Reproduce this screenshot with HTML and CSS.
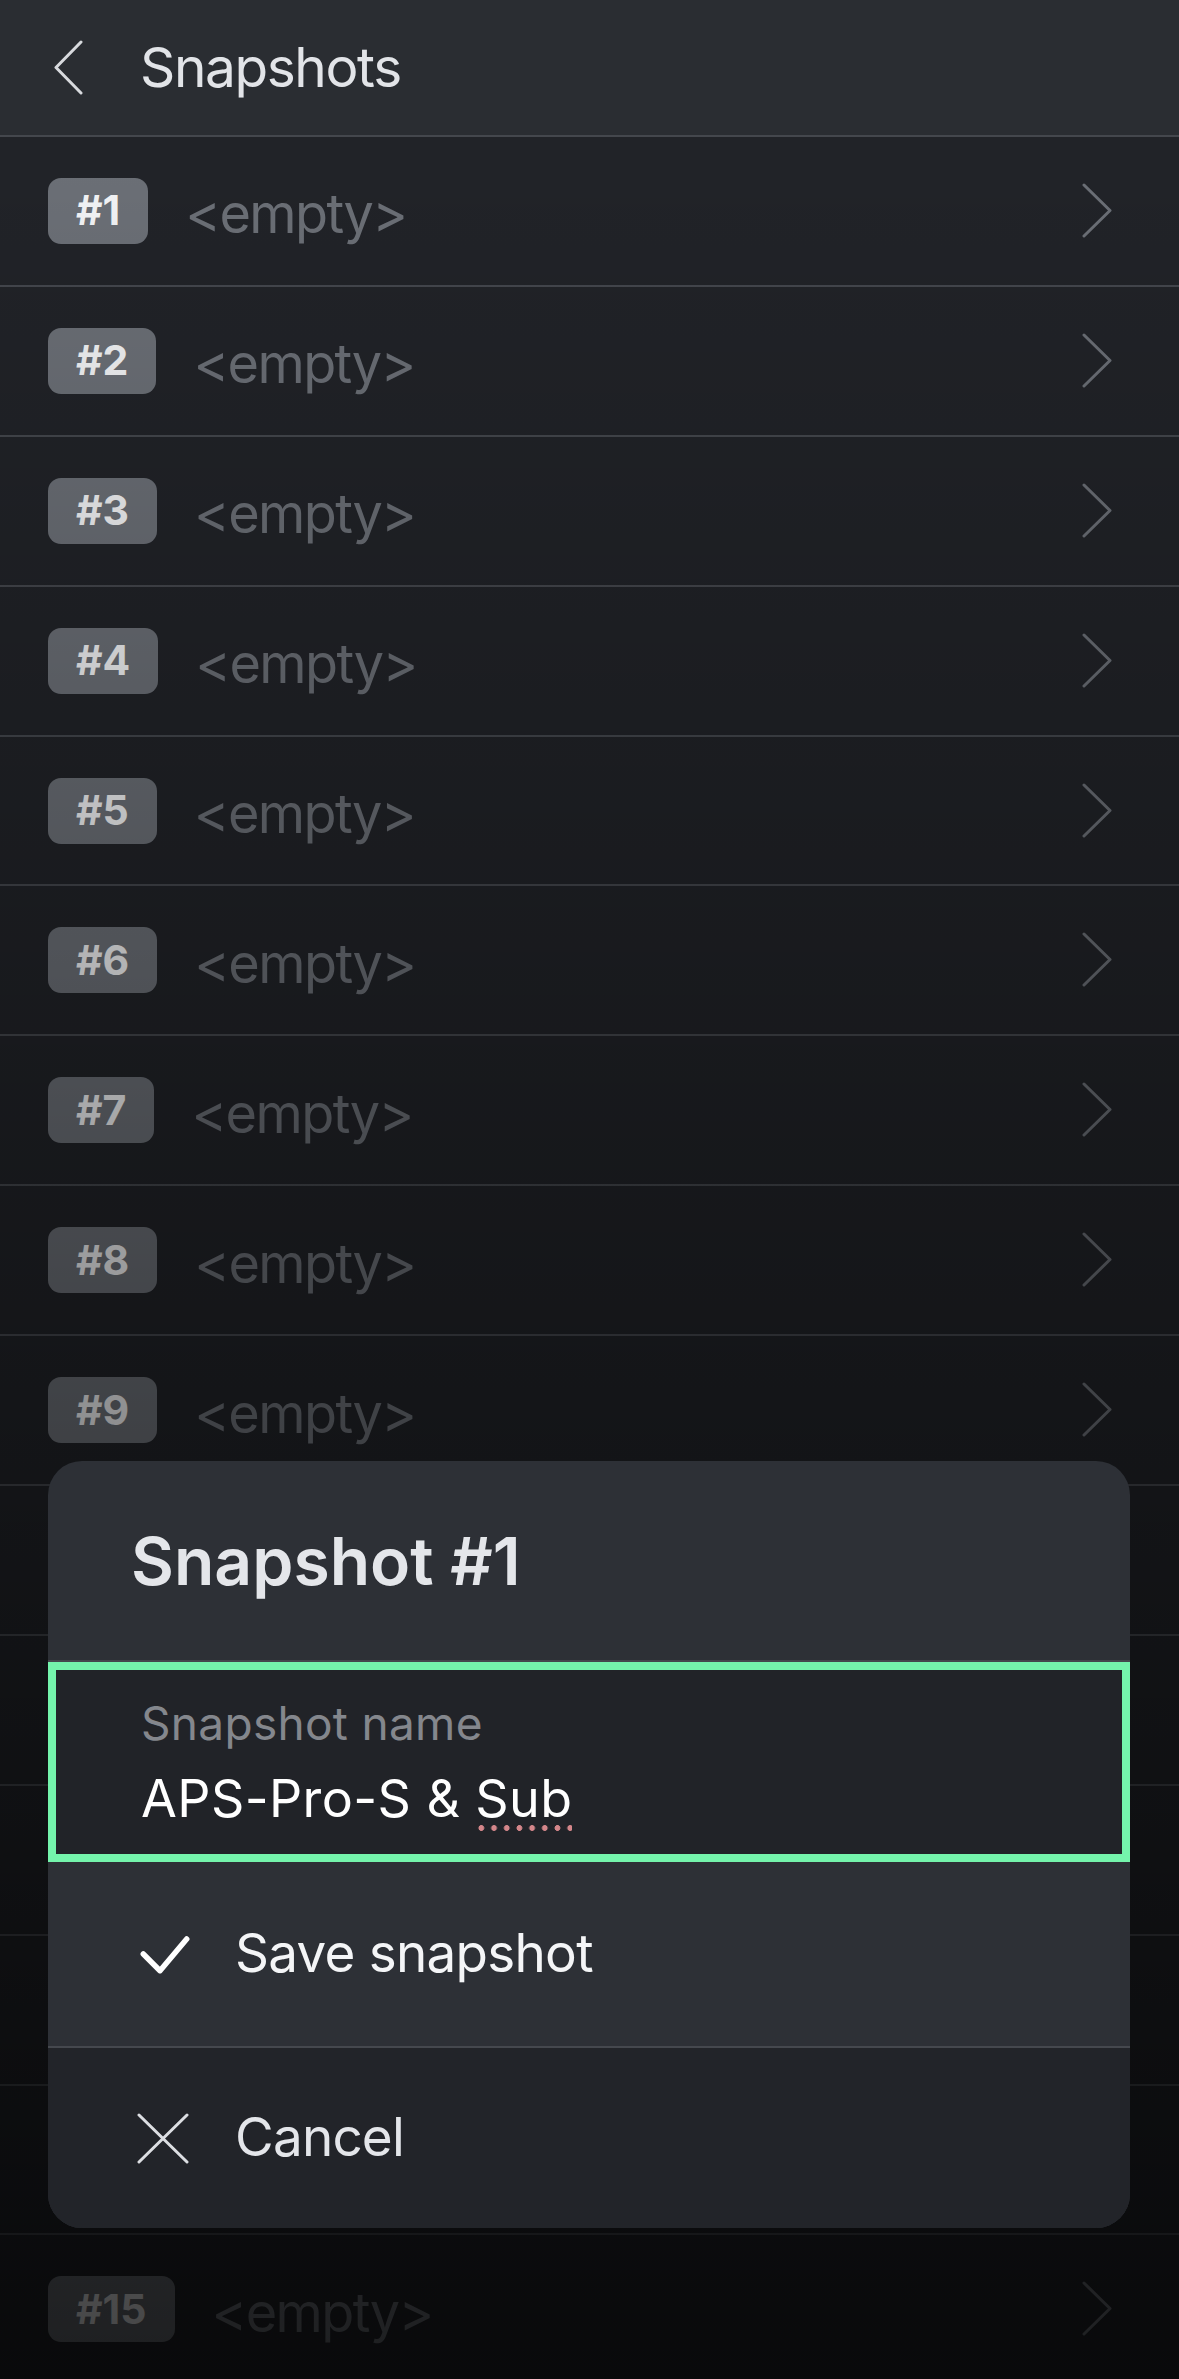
FILE: index.html
```html
<!DOCTYPE html>
<html lang="en">
<head>
<meta charset="utf-8">
<title>Snapshots</title>
<link rel="stylesheet" href="styles.css">
</head>
<body>
<div class="screen">
  <header class="topbar">
    <svg class="back" width="32" height="56" viewBox="0 0 32 56"><path d="M28 3 L3 28.5 L28 54" /></svg>
    <h1 class="title">Snapshots</h1>
  </header>
  <ul class="list">
    <li class="row"><span class="badge">#1</span><span class="empty">&lt;empty&gt;</span><svg class="chev" width="30" height="56" viewBox="0 0 30 56"><path d="M2 2 L28 27.5 L2 53" /></svg></li>
    <li class="row"><span class="badge">#2</span><span class="empty">&lt;empty&gt;</span><svg class="chev" width="30" height="56" viewBox="0 0 30 56"><path d="M2 2 L28 27.5 L2 53" /></svg></li>
    <li class="row"><span class="badge">#3</span><span class="empty">&lt;empty&gt;</span><svg class="chev" width="30" height="56" viewBox="0 0 30 56"><path d="M2 2 L28 27.5 L2 53" /></svg></li>
    <li class="row"><span class="badge">#4</span><span class="empty">&lt;empty&gt;</span><svg class="chev" width="30" height="56" viewBox="0 0 30 56"><path d="M2 2 L28 27.5 L2 53" /></svg></li>
    <li class="row"><span class="badge">#5</span><span class="empty">&lt;empty&gt;</span><svg class="chev" width="30" height="56" viewBox="0 0 30 56"><path d="M2 2 L28 27.5 L2 53" /></svg></li>
    <li class="row"><span class="badge">#6</span><span class="empty">&lt;empty&gt;</span><svg class="chev" width="30" height="56" viewBox="0 0 30 56"><path d="M2 2 L28 27.5 L2 53" /></svg></li>
    <li class="row"><span class="badge">#7</span><span class="empty">&lt;empty&gt;</span><svg class="chev" width="30" height="56" viewBox="0 0 30 56"><path d="M2 2 L28 27.5 L2 53" /></svg></li>
    <li class="row"><span class="badge">#8</span><span class="empty">&lt;empty&gt;</span><svg class="chev" width="30" height="56" viewBox="0 0 30 56"><path d="M2 2 L28 27.5 L2 53" /></svg></li>
    <li class="row"><span class="badge">#9</span><span class="empty">&lt;empty&gt;</span><svg class="chev" width="30" height="56" viewBox="0 0 30 56"><path d="M2 2 L28 27.5 L2 53" /></svg></li>
    <li class="row row-covered"><span class="badge">#10</span><span class="empty">&lt;empty&gt;</span><svg class="chev" width="30" height="56" viewBox="0 0 30 56"><path d="M2 2 L28 27.5 L2 53" /></svg></li>
    <li class="row row-covered"><span class="badge">#11</span><span class="empty">&lt;empty&gt;</span><svg class="chev" width="30" height="56" viewBox="0 0 30 56"><path d="M2 2 L28 27.5 L2 53" /></svg></li>
    <li class="row row-covered"><span class="badge">#12</span><span class="empty">&lt;empty&gt;</span><svg class="chev" width="30" height="56" viewBox="0 0 30 56"><path d="M2 2 L28 27.5 L2 53" /></svg></li>
    <li class="row row-covered"><span class="badge">#13</span><span class="empty">&lt;empty&gt;</span><svg class="chev" width="30" height="56" viewBox="0 0 30 56"><path d="M2 2 L28 27.5 L2 53" /></svg></li>
    <li class="row row-covered"><span class="badge">#14</span><span class="empty">&lt;empty&gt;</span><svg class="chev" width="30" height="56" viewBox="0 0 30 56"><path d="M2 2 L28 27.5 L2 53" /></svg></li>
    <li class="row"><span class="badge">#15</span><span class="empty">&lt;empty&gt;</span><svg class="chev" width="30" height="56" viewBox="0 0 30 56"><path d="M2 2 L28 27.5 L2 53" /></svg></li>
  </ul>
  <div class="scrim"></div>
  <div class="dialog">
    <div class="dialog-title">Snapshot #1</div>
    <div class="field">
      <div class="field-label">Snapshot name</div>
      <div class="field-value">APS-Pro-S &amp; <span class="misspelled">Sub</span></div>
    </div>
    <div class="action action-save">
      <svg class="icon-check" width="50" height="40" viewBox="0 0 50 40"><path d="M3.3 20 L20 36.7 L46.7 5" /></svg>
      <span class="action-text">Save snapshot</span>
    </div>
    <div class="action action-cancel">
      <svg class="icon-x" width="52" height="52" viewBox="0 0 52 52"><path d="M2 3 L50 50 M50 3 L2 50" /></svg>
      <span class="action-text">Cancel</span>
    </div>
  </div>
</div>
</body>
</html>
```

FILE: styles.css
```css
* { box-sizing: border-box; }
html, body { margin: 0; padding: 0; }
body {
  background: #0a0b0d;
  font-family: Inter, "Noto Sans", sans-serif;
}
.screen {
  position: relative;
  width: 1179px;
  height: 2379px;
  overflow: hidden;
  background: #212328;
}
.topbar {
  height: 137px;
  background: #2a2d32;
  border-bottom: 2px solid #44474d;
  display: flex;
  align-items: center;
  padding-left: 53px;
}
.back { display: block; margin-top: -2px; }
.back path, .chev path {
  fill: none;
  stroke-width: 3;
  stroke-linecap: round;
  stroke-linejoin: round;
}
.back path { stroke: #d8dade; }
.title {
  margin: 0 0 0 55px;
  font-size: 55px;
  font-weight: 400;
  color: #e2e4e8;
  letter-spacing: -1.4px;
  line-height: 1;
}
.list {
  list-style: none;
  margin: 0;
  padding: 0;
}
.row {
  height: 149.9px;
  border-bottom: 2px solid #44474d;
  display: flex;
  align-items: center;
  padding: 0 67px 0 48px;
  background: #212328;
}
.row-covered > * { visibility: hidden; }
.badge {
  height: 66px;
  padding: 0 28px;
  border-radius: 13px;
  background: #6b6f76;
  color: #f2f3f5;
  font-size: 41px;
  font-weight: 700;
  display: flex;
  align-items: center;
  line-height: 1;
}
.empty {
  margin-left: 37px;
  font-size: 54px;
  letter-spacing: -1.6px;
  color: #6b6f76;
  line-height: 1;
  padding-top: 7px;
}
.chev { margin-left: auto; display: block; }
.chev path { stroke: #6b6f76; }

.scrim {
  position: absolute;
  left: 0; top: 0; right: 0; bottom: 0;
  background: linear-gradient(to bottom, rgba(0,0,0,0) 0px, rgba(0,0,0,0) 160px, rgba(0,0,0,0.72) 2379px);
  pointer-events: none;
}

.dialog {
  position: absolute;
  left: 48px;
  top: 1461px;
  width: 1082px;
  height: 767px;
  border-radius: 34px;
  background: #2d3036;
  overflow: hidden;
  display: flex;
  flex-direction: column;
}
.dialog-title {
  height: 201px;
  flex: none;
  border-bottom: 2px solid #44474d;
  display: flex;
  align-items: center;
  padding-left: 83px;
  font-size: 66px;
  font-weight: 600;
  color: #e4e6ea;
  letter-spacing: 0;
  line-height: 1;
}
.field {
  height: 200px;
  flex: none;
  border: 8px solid #74f4ac;
  background: #212328;
  padding: 30px 0 0 85px;
}
.field-label {
  font-size: 46px;
  line-height: 1;
  letter-spacing: 0.3px;
  color: #84878d;
}
.field-value {
  margin-top: 27px;
  font-size: 52px;
  line-height: 1;
  letter-spacing: 0.4px;
  color: #ffffff;
}
.misspelled {
  background-image: radial-gradient(circle at center, #d4868a 2.6px, rgba(212,134,138,0) 3.2px);
  background-size: 12.7px 6px;
  background-repeat: repeat-x;
  background-position: 0 100%;
  padding-bottom: 1px;
}
.action {
  display: flex;
  align-items: center;
  padding-left: 92px;
}
.action-save {
  height: 185.5px;
  flex: none;
  border-bottom: 2.5px solid #45484e;
}
.action-cancel {
  flex: 1;
  background: #222429;
  padding-left: 89px;
}
.icon-check path {
  fill: none;
  stroke: #ffffff;
  stroke-width: 5.5;
  stroke-linecap: round;
  stroke-linejoin: round;
}
.icon-x path {
  fill: none;
  stroke: #dcdee2;
  stroke-width: 3;
  stroke-linecap: round;
}
.icon-check, .icon-x { display: block; flex: none; }
.action-save .action-text { margin-left: 45px; letter-spacing: -0.75px; }
.action-cancel .action-text { margin-left: 46px; letter-spacing: -0.8px; color: #e4e6ea; }
.action-text {
  font-size: 53px;
  line-height: 1;
  color: #f4f5f7;
}
```
